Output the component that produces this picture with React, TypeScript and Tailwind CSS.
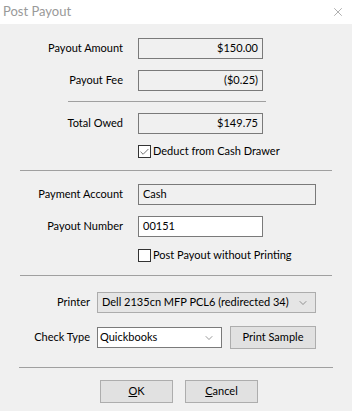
import { ChevronDown, X, Check } from 'lucide-react'

const font = { fontFamily: 'Lato, "Liberation Sans", sans-serif' }

function Field({ label, value, right, white, width = 'w-[125px]' }: { label: string; value: string; right?: boolean; white?: boolean; width?: string }) {
  return (
    <div className="flex items-center h-[21px]">
      <div className="w-[123px] text-right text-[11px] whitespace-nowrap">{label}</div>
      <div
        className={`ml-[15px] ${width} h-[21px] border border-[#7a7a7a] flex items-center px-[4px] text-[11px] whitespace-nowrap ${right ? 'justify-end' : ''} ${white ? 'bg-white' : 'bg-[#f0f0f0]'}`}
      >
        {value}
      </div>
    </div>
  )
}

function CheckRow({ label, checked }: { label: string; checked?: boolean }) {
  return (
    <div className="flex items-center h-[13px] pl-[138px]">
      <div className="w-[13px] h-[13px] border border-[#333] bg-white flex items-center justify-center">
        {checked && <Check size={12} strokeWidth={1.5} className="text-[#333]" />}
      </div>
      <span className="ml-[2px] text-[11px] whitespace-nowrap">{label}</span>
    </div>
  )
}

export default function App() {
  return (
    <div className="w-[352px] h-[411px] bg-[#f0f0f0] text-black flex flex-col" style={font}>
      {/* Title bar */}
      <div className="h-[24px] bg-white flex items-center justify-between pl-[3px] pr-[7px]">
        <span className="text-[13px] text-[#999]">Post Payout</span>
        <X size={14} strokeWidth={1} className="text-[#777]" />
      </div>

      <div className="flex flex-col">
        <div className="mt-[14px]">
          <Field label="Payout Amount" value="$150.00" right />
        </div>
        <div className="mt-[11px]">
          <Field label="Payout Fee" value="($0.25)" right />
        </div>
        <div className="mt-[10px] ml-[68px] w-[198px] h-px bg-[#a0a0a0]" />
        <div className="mt-[11px]">
          <Field label="Total Owed" value="$149.75" right />
        </div>
        <div className="mt-[11px]">
          <CheckRow label="Deduct from Cash Drawer" checked />
        </div>
        <div className="mt-[12px] mx-[20px] h-px bg-[#a0a0a0]" />
        <div className="mt-[13px]">
          <Field label="Payment Account" value="Cash" width="w-[178px]" />
        </div>
        <div className="mt-[11px]">
          <Field label="Payout Number" value="00151" white />
        </div>
        <div className="mt-[12px]">
          <CheckRow label="Post Payout without Printing" />
        </div>
        <div className="mt-[13px] mx-[20px] h-px bg-[#a0a0a0]" />

        <div className="mt-[16px] flex items-center h-[21px]">
          <div className="w-[90px] text-right text-[11px]">Printer</div>
          <div className="ml-[7px] w-[219px] h-[21px] border border-[#acacac] bg-[#e5e5e5] flex items-center justify-between pl-[4px] pr-[6px] text-[11px] whitespace-nowrap overflow-hidden">
            <span>Dell 2135cn MFP PCL6 (redirected 34)</span>
            <ChevronDown size={12} strokeWidth={1.2} className="text-[#555] shrink-0" />
          </div>
        </div>

        <div className="mt-[13px] flex items-center h-[23px]">
          <div className="w-[90px] text-right text-[11px]">Check Type</div>
          <div className="ml-[7px] w-[125px] h-[21px] border border-[#7a7a7a] bg-white flex items-center justify-between pl-[2px] pr-[6px] text-[11px]">
            <span>Quickbooks</span>
            <ChevronDown size={12} strokeWidth={1.2} className="text-[#555] shrink-0" />
          </div>
          <div className="ml-[8px] w-[86px] h-[23px] border border-[#adadad] bg-[#e1e1e1] flex items-center justify-center text-[11px] whitespace-nowrap">
            Print Sample
          </div>
        </div>

        <div className="mt-[18px] mx-[19px] h-px bg-[#a0a0a0]" />

        <div className="mt-[12px] flex pl-[100px] gap-[12px]">
          <div className="w-[73px] h-[23px] border border-[#adadad] bg-[#e1e1e1] flex items-center justify-center text-[11px]">
            <span><u>O</u>K</span>
          </div>
          <div className="w-[73px] h-[23px] border border-[#adadad] bg-[#e1e1e1] flex items-center justify-center text-[11px]">
            <span><u>C</u>ancel</span>
          </div>
        </div>
      </div>
    </div>
  )
}
